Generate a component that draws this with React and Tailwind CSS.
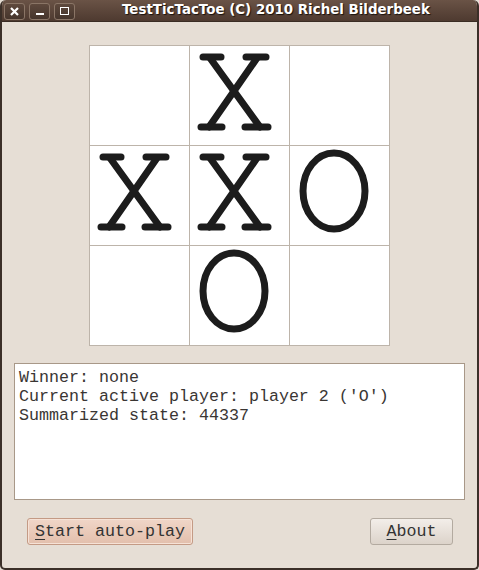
import React from "react";

const XMark = () => (
  <svg width="99" height="99" viewBox="0 0 99 99">
    <g stroke="#1c1c1c" strokeWidth="7" strokeLinecap="round" fill="none">
      <line x1="20" y1="12" x2="70" y2="81" />
      <line x1="67" y1="12" x2="19" y2="81" />
      <line x1="13" y1="11" x2="31" y2="11" />
      <line x1="56" y1="11" x2="76" y2="11" />
      <line x1="11" y1="81" x2="32" y2="81" />
      <line x1="55" y1="81" x2="78" y2="81" />
    </g>
  </svg>
);

const OMark = () => (
  <svg width="99" height="99" viewBox="0 0 99 99">
    <ellipse cx="44" cy="45" rx="31" ry="38" stroke="#1c1c1c" strokeWidth="7" fill="none" />
  </svg>
);

const board = ["", "X", "", "X", "X", "O", "", "O", ""];

export default function App() {
  return (
    <div className="w-[479px] h-[570px] bg-[#e6ded5] flex flex-col overflow-hidden">
      <div className="flex flex-col w-[479px] h-[570px] rounded-t-[6px] rounded-b-[5px] border-x-2 border-b-2 border-[#3b2f28] bg-[#e6ded5] overflow-hidden">
        {/* title bar */}
        <div className="h-[22px] shrink-0 flex items-center bg-gradient-to-b from-[#6a5346] to-[#4e3a30] border-b border-[#3a2c24] relative -mx-[2px]">
          <div className="flex gap-[4px] pl-[4px] pt-px">
            <div className="w-[21px] h-[17px] rounded-[3px] border border-[#8a7566] bg-gradient-to-b from-[#5e493d] to-[#46352c] flex items-center justify-center">
              <svg width="9" height="9" viewBox="0 0 9 9"><path d="M1 1L8 8M8 1L1 8" stroke="#fff" strokeWidth="2.2" /></svg>
            </div>
            <div className="w-[21px] h-[17px] rounded-[3px] border border-[#8a7566] bg-gradient-to-b from-[#5e493d] to-[#46352c] flex items-end justify-center pb-[4px]">
              <div className="w-[8px] h-[2px] bg-white" />
            </div>
            <div className="w-[21px] h-[17px] rounded-[3px] border border-[#8a7566] bg-gradient-to-b from-[#5e493d] to-[#46352c] flex items-center justify-center">
              <div className="w-[9px] h-[8px] border-[1.5px] border-white" />
            </div>
          </div>
          <div className="ml-[47px] whitespace-nowrap text-white font-bold text-[13.4px] [font-family:'DejaVu_Sans',sans-serif] [text-shadow:1px_1px_1px_#1a120d]">
            TestTicTacToe (C) 2010 Richel Bilderbeek
          </div>
        </div>

        {/* board */}
        <div className="flex justify-center pt-[23px] pr-px">
          <div className="grid grid-cols-[99px_99px_99px] grid-rows-[99px_99px_99px] gap-px p-px bg-[#bdb4aa]">
            {board.map((c, i) => (
              <div key={i} className="bg-white flex items-center justify-center">
                {c === "X" ? <XMark /> : c === "O" ? <OMark /> : null}
              </div>
            ))}
          </div>
        </div>

        {/* text box */}
        <div className="mx-[12px] mt-[17px] h-[137px] border border-[#a89888] bg-white px-[4px] pt-[4px] text-[#3a3633] text-[16.67px] leading-[19px] [font-family:'Liberation_Mono',monospace]">
          <div>Winner: none</div>
          <div>Current active player: player 2 ('O')</div>
          <div>Summarized state: 44337</div>
        </div>

        {/* buttons */}
        <div className="flex justify-between items-center mt-[18px] pl-[25px] pr-[24px] [font-family:'Liberation_Mono',monospace] text-[16.67px] text-[#333]">
          <div className="w-[166px] h-[27px] rounded-[3px] border border-[#c49a85] bg-gradient-to-b from-[#f0d6c8] to-[#e3bfac] flex items-center justify-center shadow-[inset_0_0_0_1px_#f6e2d6]">
            <span><span className="underline underline-offset-[3px]">S</span>tart auto-play</span>
          </div>
          <div className="w-[83px] h-[27px] rounded-[3px] border border-[#b3aaa0] bg-gradient-to-b from-[#f3eee9] to-[#dcd3ca] flex items-center justify-center">
            <span><span className="underline underline-offset-[3px]">A</span>bout</span>
          </div>
        </div>
      </div>
    </div>
  );
}
